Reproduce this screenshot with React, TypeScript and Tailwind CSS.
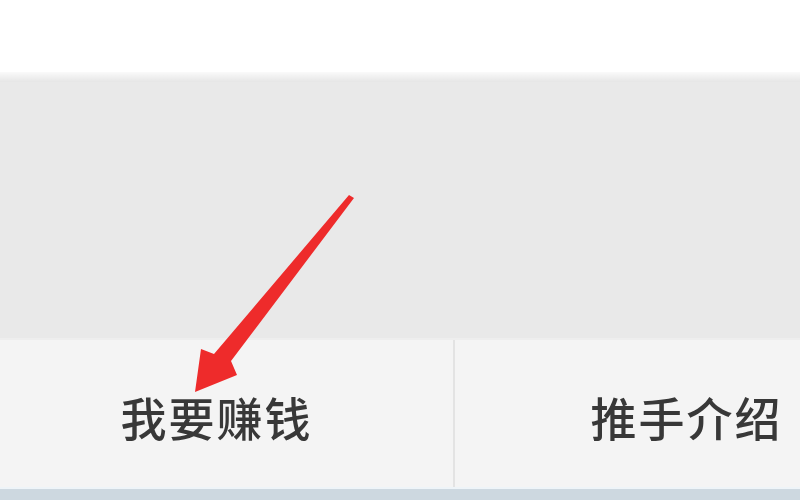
import React from "react";

/**
 * Bottom tab bar screenshot with a red pointer arrow
 */
const App: React.FC = () => {
  return (
    <div
      className="relative w-[800px] h-[500px] overflow-hidden bg-white flex flex-col blur-[0.5px]"
      style={{ fontFamily: '"Noto Sans CJK SC", "Noto Sans", sans-serif' }}
    >
      {/* top white strip */}
      <div className="h-[72px] bg-white" />
      <div className="h-[10px] bg-gradient-to-b from-[#fafafa] to-[#e6e6e6]" />

      {/* empty gray content */}
      <div className="flex-1 bg-[#e9e9e9]" />

      {/* bottom tabs */}
      <div className="h-[149px] flex bg-[#f4f4f4] border-t-2 border-[#eeeeee]">
        <div className="w-[453px] flex items-center justify-center pr-[20px] pt-[4px]">
          <span className="text-[46px] leading-none font-medium text-[#383838] tracking-[2px]">我要赚钱</span>
        </div>
        <div className="w-[2px] bg-[#e3e3e3]" />
        <div className="flex-1 flex items-center justify-center pl-[118px] pt-[4px]">
          <span className="text-[46px] leading-none font-medium text-[#383838] tracking-[2px]">推手介绍</span>
        </div>
      </div>
      <div className="h-[2px] bg-[#eef4f8]" />
      <div className="h-[11px] bg-[#cdd8e0]" />

      {/* red arrow annotation */}
      <svg
        className="absolute left-0 top-0 pointer-events-none"
        width="800"
        height="500"
        viewBox="0 0 800 500"
      >
        <path
          d="M354 198 L231 361 L237 375 L195 392 L201 349 L214 354 L349 195 Z"
          fill="#ee2b2b"
        />
      </svg>
    </div>
  );
};

export default App;
